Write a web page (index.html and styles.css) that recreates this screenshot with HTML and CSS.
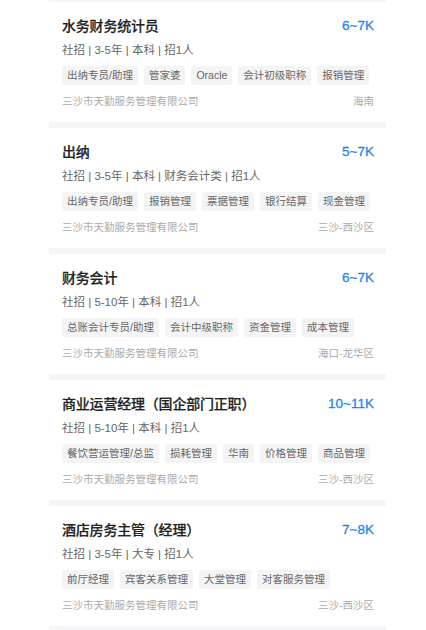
FILE: index.html
```html
<!DOCTYPE html>
<html lang="zh-CN">
<head>
    <meta charset="UTF-8">
    <meta name="viewport" content="width=device-width, initial-scale=1.0">
    <title>职位列表</title>
    <link rel="stylesheet" href="styles.css">
</head>
<body>
    <div class="job-list">
        <div class="job-card">
            <div class="job-head">
                <span class="job-title">水务财务统计员</span>
                <span class="job-salary">6~7K</span>
            </div>
            <div class="job-info">社招 | 3-5年 | 本科 | 招1人</div>
            <div class="job-tags">
                <span class="tag">出纳专员/助理</span>
                <span class="tag">管家婆</span>
                <span class="tag">Oracle</span>
                <span class="tag">会计初级职称</span>
                <span class="tag">报销管理</span>
            </div>
            <div class="job-foot">
                <span>三沙市天勤服务管理有限公司</span>
                <span>海南</span>
            </div>
        </div>

        <div class="job-card">
            <div class="job-head">
                <span class="job-title">出纳</span>
                <span class="job-salary">5~7K</span>
            </div>
            <div class="job-info">社招 | 3-5年 | 本科 | 财务会计类 | 招1人</div>
            <div class="job-tags">
                <span class="tag">出纳专员/助理</span>
                <span class="tag">报销管理</span>
                <span class="tag">票据管理</span>
                <span class="tag">银行结算</span>
                <span class="tag">现金管理</span>
            </div>
            <div class="job-foot">
                <span>三沙市天勤服务管理有限公司</span>
                <span>三沙-西沙区</span>
            </div>
        </div>

        <div class="job-card">
            <div class="job-head">
                <span class="job-title">财务会计</span>
                <span class="job-salary">6~7K</span>
            </div>
            <div class="job-info">社招 | 5-10年 | 本科 | 招1人</div>
            <div class="job-tags">
                <span class="tag">总账会计专员/助理</span>
                <span class="tag">会计中级职称</span>
                <span class="tag">资金管理</span>
                <span class="tag">成本管理</span>
            </div>
            <div class="job-foot">
                <span>三沙市天勤服务管理有限公司</span>
                <span>海口-龙华区</span>
            </div>
        </div>

        <div class="job-card">
            <div class="job-head">
                <span class="job-title">商业运营经理（国企部门正职）</span>
                <span class="job-salary">10~11K</span>
            </div>
            <div class="job-info">社招 | 5-10年 | 本科 | 招1人</div>
            <div class="job-tags">
                <span class="tag">餐饮营运管理/总监</span>
                <span class="tag">损耗管理</span>
                <span class="tag">华南</span>
                <span class="tag">价格管理</span>
                <span class="tag">商品管理</span>
            </div>
            <div class="job-foot">
                <span>三沙市天勤服务管理有限公司</span>
                <span>三沙-西沙区</span>
            </div>
        </div>

        <div class="job-card">
            <div class="job-head">
                <span class="job-title">酒店房务主管（经理）</span>
                <span class="job-salary">7~8K</span>
            </div>
            <div class="job-info">社招 | 3-5年 | 大专 | 招1人</div>
            <div class="job-tags">
                <span class="tag">前厅经理</span>
                <span class="tag">宾客关系管理</span>
                <span class="tag">大堂管理</span>
                <span class="tag">对客服务管理</span>
            </div>
            <div class="job-foot">
                <span>三沙市天勤服务管理有限公司</span>
                <span>三沙-西沙区</span>
            </div>
        </div>
    </div>
</body>
</html>
```

FILE: styles.css
```css
body {
    margin: 0;
    background: #fff;
    font-family: "Liberation Sans", "Noto Sans CJK SC", sans-serif;
    color: #333;
}
.job-list {
    width: 337px;
    margin-left: 49px;
    border-top: 2px solid #f5f5f7;
}
.job-card {
    height: 106px;
    padding: 14px 12px 0 13px;
    border-bottom: 6px solid #f5f5f7;
}
.job-head {
    display: flex;
    justify-content: space-between;
    align-items: center;
    height: 18px;
}
.job-title {
    font-size: 14px;
    font-weight: 500;
    color: #222;
    letter-spacing: -0.2px;
    -webkit-text-stroke: 0.2px #222;
}
.job-salary {
    font-size: 13.5px;
    font-weight: 500;
    color: #1f86ef;
    -webkit-text-stroke: 0.3px #1f86ef;
}
.job-info {
    margin-top: 8px;
    font-size: 11.5px;
    line-height: 16px;
    color: #666;
}
.job-tags {
    display: flex;
    gap: 6px;
    margin-top: 8px;
}
.tag {
    height: 19px;
    line-height: 19px;
    padding: 0 5px;
    background: #f4f4f5;
    border-radius: 2px;
    font-size: 10.5px;
    color: #666;
}
.job-foot {
    display: flex;
    justify-content: space-between;
    margin-top: 9px;
    font-size: 10.5px;
    line-height: 14px;
    color: #aaa;
}
```
